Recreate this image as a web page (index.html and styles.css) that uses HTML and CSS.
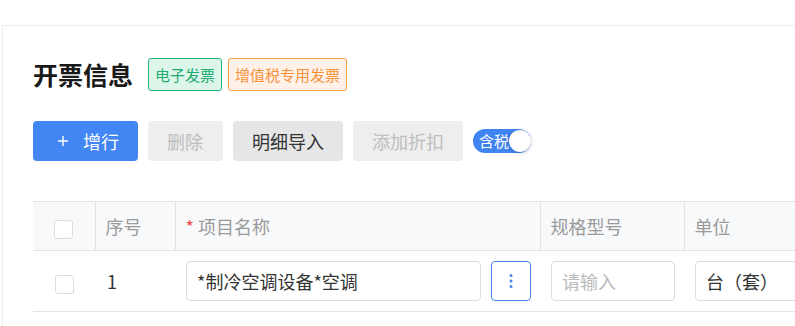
FILE: index.html
```html
<!DOCTYPE html>
<html lang="zh-CN">
<head>
<meta charset="utf-8">
<title>开票信息</title>
<link rel="stylesheet" href="styles.css">
</head>
<body>
<div class="panel">
  <div class="title-row">
    <h2 class="title">开票信息</h2>
    <span class="tag tag-green">电子发票</span>
    <span class="tag tag-orange">增值税专用发票</span>
  </div>
  <div class="toolbar">
    <button class="btn btn-primary"><svg class="plus" width="10" height="10" viewBox="0 0 10 10"><path d="M5 0V10M0 5H10" stroke="#fff" stroke-width="1.4"/></svg>增行</button>
    <button class="btn btn-disabled btn-short">删除</button>
    <button class="btn btn-default">明细导入</button>
    <button class="btn btn-disabled">添加折扣</button>
    <span class="switch"><span class="switch-text">含税</span><span class="knob"></span></span>
  </div>
  <table class="grid">
    <colgroup>
      <col class="c-check"><col class="c-no"><col class="c-name"><col class="c-spec"><col class="c-unit">
    </colgroup>
    <thead>
      <tr>
        <th class="center"><span class="checkbox"></span></th>
        <th>序号</th>
        <th><span class="req">*</span> 项目名称</th>
        <th>规格型号</th>
        <th>单位</th>
      </tr>
    </thead>
    <tbody>
      <tr>
        <td class="center"><span class="checkbox"></span></td>
        <td class="no">1</td>
        <td>
          <div class="name-cell">
            <div class="input name-input">*制冷空调设备*空调</div>
            <button class="more-btn"><svg width="4" height="16" viewBox="0 0 4 16"><circle cx="2" cy="2.5" r="1.5" fill="#4a86e8"/><circle cx="2" cy="8" r="1.5" fill="#4a86e8"/><circle cx="2" cy="13.5" r="1.5" fill="#4a86e8"/></svg></button>
          </div>
        </td>
        <td><div class="input placeholder">请输入</div></td>
        <td><div class="input unit-input">台（套）</div></td>
      </tr>
    </tbody>
  </table>
</div>
</body>
</html>
```

FILE: styles.css
```css
html, body {
  margin: 0;
  padding: 0;
  overflow: hidden;
  background: #fff;
}
body {
  font-family: "Noto Sans CJK SC", "Noto Sans", sans-serif;
  color: #333;
}
.panel {
  margin: 25px 0 0 2px;
  width: 1100px;
  border: 1px solid #ececec;
  padding: 32px 30px 40px;
}
.title-row {
  display: flex;
  align-items: center;
  height: 33px;
}
.title {
  margin: 0 15px 0 0;
  font-size: 25px;
  font-weight: 700;
  color: #1a1a1a;
  line-height: 33px;
}
.tag {
  box-sizing: border-box;
  height: 33px;
  line-height: 31px;
  padding: 0 6px;
  font-size: 15px;
  border: 1px solid;
  border-radius: 3px;
  margin-right: 6px;
}
.tag-green {
  color: #1fa872;
  border-color: #22b579;
  background: #dcf7ea;
}
.tag-orange {
  color: #f5923a;
  border-color: #f6a04c;
  background: #fff1e8;
}
.toolbar {
  display: flex;
  align-items: center;
  gap: 10px;
  margin-top: 30px;
  height: 40px;
}
.btn {
  height: 40px;
  border: none;
  border-radius: 4px;
  padding: 0 19px;
  font-family: inherit;
  font-size: 18px;
  display: flex;
  align-items: center;
}
.btn-short {
  padding: 0 20px 0 19px;
}
.btn-primary {
  background: #4286f4;
  color: #fff;
  padding-left: 25px;
}
.plus {
  margin-right: 15px;
}
.btn-disabled {
  background: #eeeeee;
  color: #bdbdbd;
}
.btn-default {
  background: #e6e6e6;
  color: #333;
}
.switch {
  box-sizing: border-box;
  width: 58px;
  height: 24px;
  border-radius: 12px;
  background: #3f84f0;
  display: flex;
  align-items: center;
  justify-content: space-between;
  padding: 0 0 0 6px;
  white-space: nowrap;
}
.switch-text {
  color: #fff;
  font-size: 15px;
  line-height: 24px;
}
.knob {
  flex: none;
  width: 22px;
  height: 22px;
  border-radius: 50%;
  background: #fff;
  box-shadow: 0 1px 4px rgba(0, 0, 0, 0.2);
}
.grid {
  margin-top: 40px;
  border-collapse: collapse;
  table-layout: fixed;
  width: 1040px;
}
.c-check { width: 62px; }
.c-no { width: 80px; }
.c-name { width: 365px; }
.c-spec { width: 144px; }
.grid th {
  background: #f8f9fb;
  border-top: 1px solid #e3e3e3;
  border-bottom: 1px solid #e3e3e3;
  border-left: 1px solid #e3e3e3;
  height: 48px;
  padding: 0 10px;
  text-align: left;
  font-weight: 400;
  font-size: 18px;
  color: #9a9a9a;
}
.grid th:first-child {
  border-left: none;
}
.grid td {
  border-bottom: 1px solid #e3e3e3;
  padding: 10px 9px 10px 11px;
  height: 40px;
  font-size: 18px;
  color: #333;
}
.grid .center {
  text-align: center;
  padding: 0;
}
.grid .no {
  padding-left: 12px;
}
.req {
  color: #f04848;
}
.checkbox {
  display: inline-block;
  vertical-align: middle;
  box-sizing: border-box;
  width: 19px;
  height: 19px;
  border: 1px solid #dcdcdc;
  border-radius: 3px;
  background: #fff;
}
.name-cell {
  display: flex;
  gap: 10px;
  align-items: center;
}
.input {
  box-sizing: border-box;
  height: 40px;
  line-height: 38px;
  border: 1px solid #dcdcdc;
  border-radius: 4px;
  padding: 0 10px;
  font-size: 18px;
  color: #333;
  white-space: nowrap;
}
.name-input {
  width: 295px;
}
.placeholder {
  color: #bbb;
}
.more-btn {
  box-sizing: border-box;
  width: 40px;
  height: 40px;
  border: 1px solid #4a86e8;
  border-radius: 4px;
  background: #fff;
  display: flex;
  align-items: center;
  justify-content: center;
  padding: 0;
}
```
